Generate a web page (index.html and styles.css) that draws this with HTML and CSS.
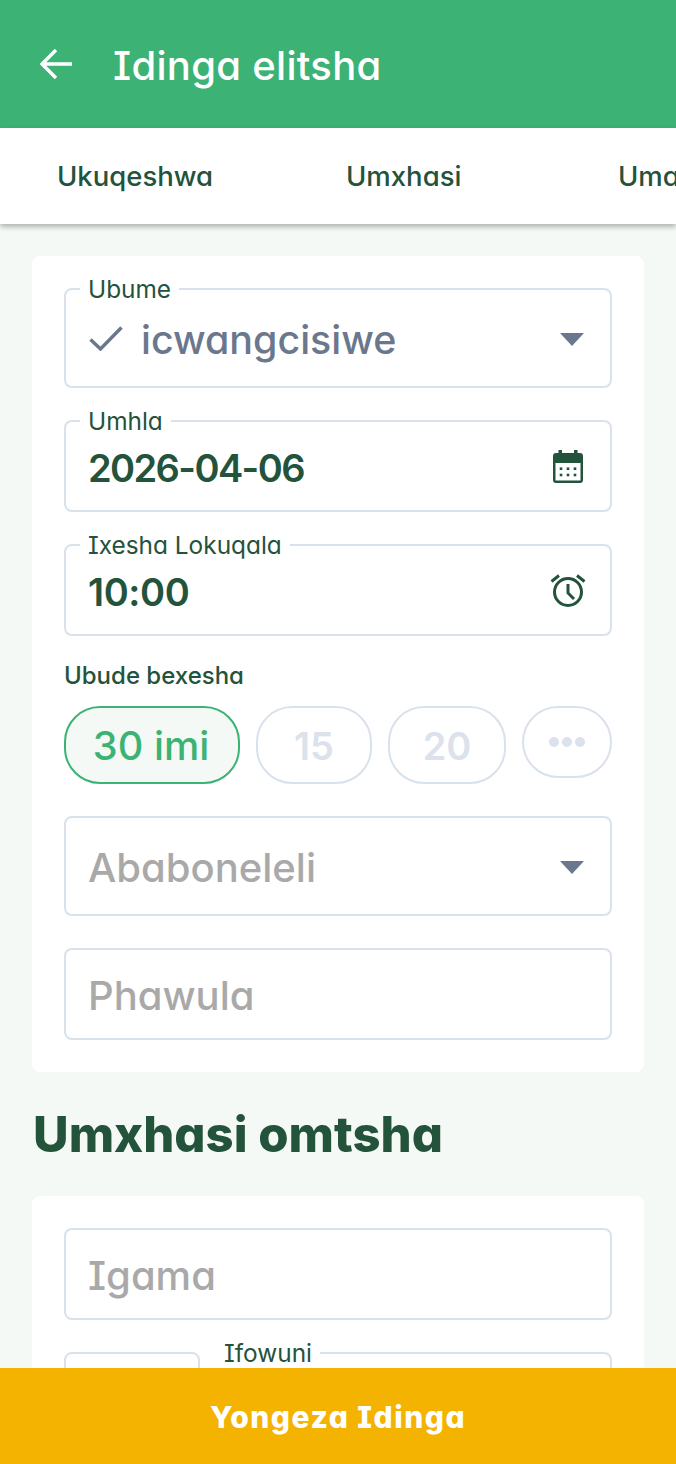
FILE: index.html
```html
<!DOCTYPE html>
<html lang="xh">
<head>
<meta charset="utf-8">
<title>Idinga elitsha</title>
<link rel="stylesheet" href="styles.css">
</head>
<body>
<div class="app">
  <header class="appbar">
    <svg class="back" viewBox="0 0 34 32" width="34" height="32"><path d="M33 16H3M17 2 3 16 17 30" fill="none" stroke="#fff" stroke-width="3.400"/></svg>
    <h1 class="title">Idinga elitsha</h1>
  </header>
  <nav class="tabs">
    <span class="tab tab-a">Ukuqeshwa</span>
    <span class="tab tab-b">Umxhasi</span>
    <span class="tab tab-c">Umakhi</span>
  </nav>
  <main class="scroll">
    <section class="card">
      <div class="field tall">
        <span class="notch">Ubume</span>
        <svg class="check" viewBox="0 0 34 25" width="34" height="25"><path d="M1.500 13.500 11.500 23 32.500 1.500" fill="none" stroke="#6b778d" stroke-width="3.400"/></svg>
        <span class="value status">icwangcisiwe</span>
        <span class="caret"></span>
      </div>
      <div class="field">
        <span class="notch">Umhla</span>
        <span class="value strong date">2026-04-06</span>
        <svg class="end-icon" viewBox="0 0 30 33" width="30" height="33"><path fill="#24533c" fill-rule="evenodd" d="M5.500 0h3.500v3h12V0h3.500v3H27a3 3 0 0 1 3 3v24a3 3 0 0 1-3 3H3a3 3 0 0 1-3-3V6a3 3 0 0 1 3-3h2.500zM2.500 13v17.500h25V13z"/><g fill="#24533c"><rect x="6.700" y="17.400" width="2.600" height="2.600"/><rect x="13.700" y="17.400" width="2.600" height="2.600"/><rect x="20.700" y="17.400" width="2.600" height="2.600"/><rect x="6.700" y="23.700" width="2.600" height="2.600"/><rect x="13.700" y="23.700" width="2.600" height="2.600"/><rect x="20.700" y="23.700" width="2.600" height="2.600"/></g></svg>
      </div>
      <div class="field">
        <span class="notch">Ixesha Lokuqala</span>
        <span class="value strong time">10:00</span>
        <svg class="end-icon alarm" viewBox="0 0 36 34" width="36" height="34"><g fill="none" stroke="#24533c" stroke-width="3"><circle cx="18" cy="19" r="13.500"/><path d="M18 11v9l6 6" /><path d="M1.500 8.500 9 2.500M34.500 8.500 27 2.500"/></g></svg>
      </div>
      <div class="duration">
        <span class="duration-label">Ubude bexesha</span>
        <div class="chips">
          <span class="chip active">30 imi</span>
          <span class="chip c15">15</span>
          <span class="chip c20">20</span>
          <span class="chip more"><i></i><i></i><i></i></span>
        </div>
      </div>
      <div class="field tall">
        <span class="value hint">Ababoneleli</span>
        <span class="caret"></span>
      </div>
      <div class="field">
        <span class="value hint">Phawula</span>
      </div>
    </section>
    <h2 class="heading">Umxhasi omtsha</h2>
    <section class="card">
      <div class="field">
        <span class="value hint">Igama</span>
      </div>
      <div class="phone">
        <div class="field code"></div>
        <div class="field number"><span class="notch">Ifowuni</span></div>
      </div>
    </section>
  </main>
  <footer class="submit">Yongeza Idinga</footer>
</div>
</body>
</html>
```
FILE: styles.css
```css
* { box-sizing: border-box; }
html, body { margin: 0; padding: 0; }
body { font-family: "Inter", "Lato", sans-serif; font-feature-settings: "cv11" 1, "cv08" 1; color: #24533c; }
.app { width: 676px; height: 1464px; display: flex; flex-direction: column; overflow: hidden; background: #f5f9f6; }
.appbar { flex: 0 0 128px; background: #3cb274; display: flex; align-items: center; padding-left: 39px; gap: 40px; }
.back { display: block; }
.title { margin: 0; font-size: 40px; font-weight: 500; color: #fff; line-height: 48px; letter-spacing: .3px; padding-top: 4px; }
.tabs { flex: 0 0 96px; background: #fff; display: flex; align-items: center; padding-left: 57px; box-shadow: 0 3px 5px rgba(0,0,0,.28); position: relative; z-index: 1; white-space: nowrap; overflow: hidden; }
.tab { font-size: 27.500px; font-weight: 500; flex: none; }
.tab-a { width: 289px; }
.tab-b { width: 272px; }
.scroll { flex: 1 1 0; min-height: 0; overflow: hidden; padding: 32px 32px 0; }
.card { background: #fff; border-radius: 8px; padding: 32px; display: flex; flex-direction: column; gap: 32px; }
.field { position: relative; height: 92px; border: 2px solid #d9e2ec; border-radius: 8px; display: flex; align-items: center; padding: 0 24px 0 23px; }
.field.tall { height: 100px; }
.notch { position: absolute; left: 14px; top: -16px; padding: 0 8px; background: #fff; font-size: 24.400px; line-height: 30px; white-space: nowrap; }
.value { font-size: 40px; line-height: 48px; flex: 1; white-space: nowrap; margin-top: 4px; }
.status { color: #6b778d; font-weight: 500; margin-left: 18px; font-size: 39.400px; margin-top: 3px; }
.strong { font-weight: 600; font-size: 38px; margin-left: -1px; }
.date { letter-spacing: -1.600px; }
.time { letter-spacing: -.4px; }
.hint { color: #a9a9a9; font-weight: 500; margin-left: -1px; }
.caret { width: 0; height: 0; border-left: 12px solid transparent; border-right: 12px solid transparent; border-top: 13px solid #6b778d; margin-right: 2px; margin-top: 2px; }
.check, .end-icon { flex: none; display: block; }
.end-icon { margin-right: 3px; }
.alarm { margin-right: 0; }
.duration { display: flex; flex-direction: column; gap: 15px; margin-top: -7px; }
.duration-label { font-size: 24px; line-height: 30px; font-weight: 500; }
.chips { display: flex; justify-content: space-between; align-items: flex-start; }
.chip { height: 78px; border: 2px solid #d9e2ec; border-radius: 36px; display: flex; align-items: center; justify-content: center; font-size: 38px; font-weight: 600; color: #dbe2ec; padding-top: 2px; }
.chip.active { width: 176px; border-color: #3cb274; background: #f5f9f6; color: #3cb274; font-weight: 500; font-size: 39.700px; padding-right: 2px; }
.c15 { width: 116px; }
.c20 { width: 118px; }
.more { width: 90px; height: 72px; gap: 3px; padding-top: 0; }
.more i { width: 10px; height: 10px; border-radius: 50%; background: #dbe2ec; }
.heading { margin: 0; height: 124px; padding: 32px 1px 0; font-size: 49px; line-height: 62px; font-weight: 800; }
.phone { display: flex; gap: 16px; }
.code { flex: 0 0 136px; }
.number { flex: 1; }
.phone .notch { left: -2px; }
.submit { flex: 0 0 96px; background: #f5b301; color: #fff; font-size: 30px; font-weight: 800; letter-spacing: 1.500px; padding-top: 2px; display: flex; align-items: center; justify-content: center; position: relative; z-index: 1; }
```
